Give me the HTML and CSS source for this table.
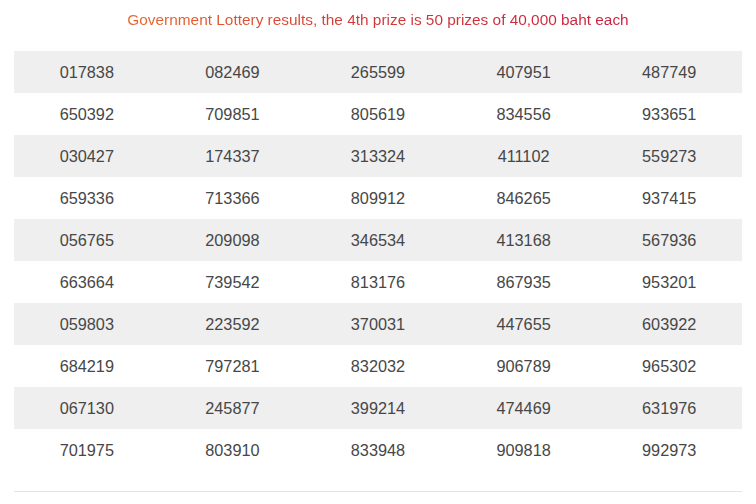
FILE: index.html
```html
<!DOCTYPE html>
<html>
<head>
<meta charset="utf-8">
<link rel="stylesheet" href="styles.css">
</head>
<body>
<div class="wrap">
  <h2 class="title"><span class="grad">Government Lottery results, the 4th prize is 50 prizes of 40,000 baht each</span></h2>
  <div class="table">
    <div class="row"><div>017838</div><div>082469</div><div>265599</div><div>407951</div><div>487749</div></div>
    <div class="row"><div>650392</div><div>709851</div><div>805619</div><div>834556</div><div>933651</div></div>
    <div class="row"><div>030427</div><div>174337</div><div>313324</div><div>411102</div><div>559273</div></div>
    <div class="row"><div>659336</div><div>713366</div><div>809912</div><div>846265</div><div>937415</div></div>
    <div class="row"><div>056765</div><div>209098</div><div>346534</div><div>413168</div><div>567936</div></div>
    <div class="row"><div>663664</div><div>739542</div><div>813176</div><div>867935</div><div>953201</div></div>
    <div class="row"><div>059803</div><div>223592</div><div>370031</div><div>447655</div><div>603922</div></div>
    <div class="row"><div>684219</div><div>797281</div><div>832032</div><div>906789</div><div>965302</div></div>
    <div class="row"><div>067130</div><div>245877</div><div>399214</div><div>474469</div><div>631976</div></div>
    <div class="row"><div>701975</div><div>803910</div><div>833948</div><div>909818</div><div>992973</div></div>
  </div>
</div>
</body>
</html>
```
FILE: styles.css
```css
html, body {
  margin: 0;
  padding: 0;
  background: #ffffff;
}
.wrap {
  padding: 0 14px;
  font-family: "Liberation Sans", Arial, sans-serif;
}
.title {
  margin: 10px 0 0;
  height: 20px;
  line-height: 20px;
  font-size: 15.4px;
  font-weight: normal;
  text-align: center;
}
.grad {
  background: linear-gradient(90deg, #e8672c 0%, #d23a37 45%, #c8203f 100%);
  -webkit-background-clip: text;
  background-clip: text;
  color: transparent;
}
.table {
  margin-top: 21px;
  padding-bottom: 20px;
  border-bottom: 1px solid #e3e3e3;
}
.row {
  display: grid;
  grid-template-columns: repeat(5, 1fr);
  height: 42px;
  align-items: center;
  text-align: center;
  font-size: 16.3px;
  color: #474747;
}
.row:nth-child(odd) {
  background: #efefef;
}
```
